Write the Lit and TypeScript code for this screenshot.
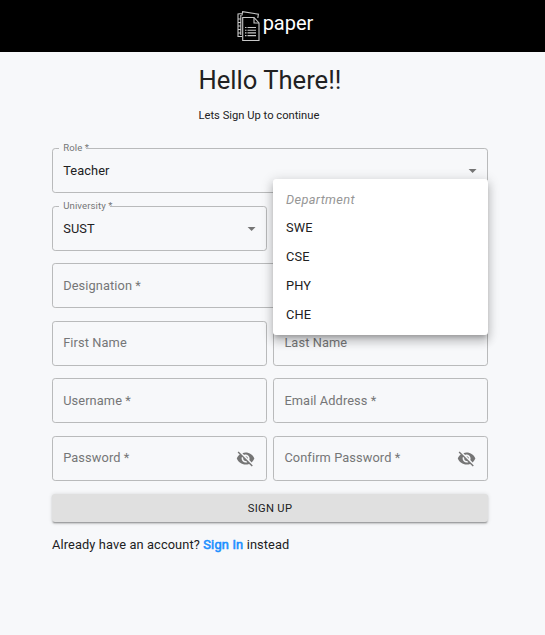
import { LitElement, html, css, svg, nothing } from "lit";
import { customElement, property } from "lit/decorators.js";
import { classMap } from "lit/directives/class-map.js";

@customElement("outlined-field")
class OutlinedField extends LitElement {
  @property() label = "";
  @property() value = "";
  @property() icon = "";

  static styles = css`
    :host { display: block; min-width: 0; }
    .field {
      box-sizing: border-box;
      position: relative;
      display: flex;
      align-items: center;
      justify-content: space-between;
      height: 45px;
      padding: 0 10px;
      border: 1px solid #b9babb;
      border-radius: 3.2px;
      color: #757677;
      font-size: 12.8px;
      letter-spacing: 0.1px;
      line-height: 15.2px;
    }
    .filled { color: #212122; }
    .float {
      position: absolute;
      top: -8px;
      left: 6.2px;
      height: 14px;
      line-height: 14px;
      padding: 0 0 0 4px;
      font-size: 9.6px;
      letter-spacing: 0.09px;
      color: #757677;
      background: linear-gradient(#f7f8fa, #f7f8fa) 0 0 / calc(100% - 3px) 100% no-repeat;
    }
    .text { margin-left: 0.2px; padding-bottom: 1px; }
    .filled .text { padding: 1px 0 0; }
    .arrow, .eye { display: block; fill: #757575; flex: none; }
    .arrow { width: 19.2px; height: 19.2px; margin-right: -5px; }
    .eye { width: 19.2px; height: 19.2px; margin-right: 0.6px; }
  `;

  private renderIcon() {
    if (this.icon === "arrow") {
      return html`<svg class="arrow" viewBox="0 0 24 24">${svg`<path d="M7 10l5 5 5-5z"/>`}</svg>`;
    }
    if (this.icon === "eye") {
      return html`<svg class="eye" viewBox="0 0 24 24">${svg`<path d="M12 7c2.76 0 5 2.24 5 5 0 .65-.13 1.26-.36 1.83l2.92 2.92c1.51-1.26 2.7-2.89 3.43-4.75-1.73-4.39-6-7.5-11-7.5-1.4 0-2.74.25-3.98.7l2.16 2.16C10.74 7.13 11.35 7 12 7zM2 4.27l2.28 2.28.46.46C3.08 8.3 1.78 10.02 1 12c1.73 4.39 6 7.5 11 7.5 1.55 0 3.03-.3 4.38-.84l.42.42L19.73 22 21 20.73 3.27 3 2 4.27zM7.53 9.8l1.55 1.55c-.05.21-.08.43-.08.65 0 1.66 1.34 3 3 3 .22 0 .44-.03.65-.08l1.55 1.55c-.67.33-1.41.53-2.2.53-2.76 0-5-2.24-5-5 0-.79.2-1.53.53-2.2zm4.31-.78l3.15 3.15.02-.16c0-1.66-1.34-3-3-3l-.17.01z"/>`}</svg>`;
    }
    return nothing;
  }

  render() {
    return html`<div class=${classMap({ field: true, filled: !!this.value })}>
      ${this.value ? html`<span class="float">${this.label}</span>` : nothing}
      <span class="text">${this.value || this.label}</span>
      ${this.renderIcon()}
    </div>`;
  }
}

@customElement("app-root")
class AppRoot extends LitElement {
  static styles = css`
    :host {
      display: block;
      min-height: 635px;
      background: #f7f8fa;
      color: #212122;
      font-family: Roboto, sans-serif;
    }
    header {
      box-sizing: border-box;
      height: 52px;
      display: flex;
      justify-content: center;
      align-items: flex-start;
      padding: 10px 0 0 4px;
      background: #000;
      color: #fff;
      font-size: 20px;
      line-height: 26px;
    }
    .logo { width: 24px; height: 32px; margin-right: 3px; }
    .intro { width: 148px; margin: 0 auto; }
    h1 { margin: 0; padding-top: 13px; font-size: 25.6px; font-weight: 400; line-height: 30px; white-space: nowrap; }
    .intro p { margin: 12.5px 0 0; font-size: 11.2px; line-height: 16px; letter-spacing: 0; }
    form {
      display: grid;
      grid-template-columns: 1fr 1fr;
      gap: 12.6px 6.4px;
      width: 436px;
      margin: 24.5px 0 0 52px;
    }
    .wide { grid-column: 1 / -1; }
    .anchor { position: relative; }
    .menu {
      box-sizing: border-box;
      position: absolute;
      z-index: 2;
      top: -27px;
      left: 0;
      right: 0;
      margin: 0;
      padding: 7px 0 5.8px;
      list-style: none;
      background: #fff;
      border-radius: 3.2px;
      box-shadow: 0 4px 4px -2.4px rgba(0,0,0,.2), 0 6.4px 8px 0.8px rgba(0,0,0,.14), 0 2.4px 11.2px 1.6px rgba(0,0,0,.12);
      font-size: 12.8px;
      letter-spacing: 0.12px;
    }
    .menu li { height: 28.8px; line-height: 28.8px; padding: 0 12.8px; }
    .menu .hint { font-style: italic; color: #969696; letter-spacing: 0.34px; }
    button {
      height: 28.4px;
      padding: 1.4px 0 0;
      border: 0;
      border-radius: 3.2px;
      background: #e0e0e0;
      color: #212122;
      font: 400 11.2px/27px Roboto, sans-serif;
      letter-spacing: 0.32px;
      box-shadow: 0 2.4px 0.8px -1.6px rgba(0,0,0,.2), 0 1.6px 1.6px 0 rgba(0,0,0,.14), 0 0.8px 4px 0 rgba(0,0,0,.12);
    }
    .switch { margin: 13px 0 0 52px; font-size: 12.8px; line-height: 19.2px; letter-spacing: 0.12px; }
    .switch a { color: #1e90ff; -webkit-text-stroke: 0.6px #1e90ff; letter-spacing: 0.2px; }
  `;

  render() {
    return html`
      <header>
        <svg class="logo" viewBox="0 0 24 32" fill="none" stroke="#c8c8c8" stroke-width="1.1">
          <path d="M6 5.5L6.6 1.6L22.4 4.2L21.8 8M6 3.5L2 4V26.5H6M2 9H4.5M2 12.5H4.5M2 16H4.5M2 19.5H4.5M2 23H4.5M4.8 5V25"/>
          <path d="M6.7 7.5H18L23 13V30.5H6.7Z"/>
          <path d="M18 7.5V13H23M9 17.5H10.5M11.5 17.5H20M9 20.2H10.5M11.5 20.2H20M9 22.9H10.5M11.5 22.9H20M9 25.6H10.5M11.5 25.6H20"/>
        </svg>
        <span>paper</span>
      </header>
      <div class="intro">
        <h1>Hello There!!</h1>
        <p>Lets Sign Up to continue</p>
      </div>
      <form>
        <outlined-field class="wide" label="Role *" value="Teacher" icon="arrow"></outlined-field>
        <outlined-field label="University *" value="SUST" icon="arrow"></outlined-field>
        <div class="anchor">
          <outlined-field></outlined-field>
          <ul class="menu">
            <li class="hint">Department</li>
            ${["SWE", "CSE", "PHY", "CHE"].map((name) => html`<li>${name}</li>`)}
          </ul>
        </div>
        <outlined-field class="wide" label="Designation *"></outlined-field>
        <outlined-field label="First Name"></outlined-field>
        <outlined-field label="Last Name"></outlined-field>
        <outlined-field label="Username *"></outlined-field>
        <outlined-field label="Email Address *"></outlined-field>
        <outlined-field label="Password *" icon="eye"></outlined-field>
        <outlined-field label="Confirm Password *" icon="eye"></outlined-field>
        <button class="wide" type="button">SIGN UP</button>
      </form>
      <div class="switch">Already have an account? <a>Sign In</a> instead</div>
    `;
  }
}
